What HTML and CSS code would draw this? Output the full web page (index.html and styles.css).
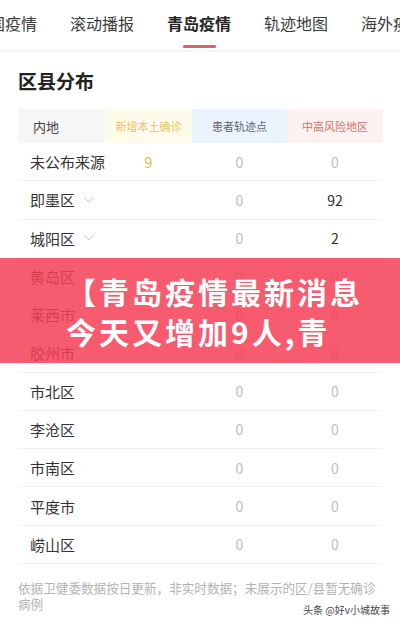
FILE: index.html
```html
<!DOCTYPE html>
<html lang="zh-CN">
<head>
<meta charset="utf-8">
<link rel="stylesheet" href="styles.css">
</head>
<body>
<div class="page">
  <nav class="tabs">
    <div class="tab-row">
      <span class="tab">全国疫情</span>
      <span class="tab">滚动播报</span>
      <span class="tab active">青岛疫情</span>
      <span class="tab">轨迹地图</span>
      <span class="tab">海外疫情</span>
    </div>
  </nav>
  <section class="district">
    <h2 class="title">区县分布</h2>
    <div class="table">
      <div class="row head">
        <div class="c-name">内地</div>
        <div class="c-new">新增本土确诊</div>
        <div class="c-track">患者轨迹点</div>
        <div class="c-risk">中高风险地区</div>
      </div>
      <div class="row"><div class="name">未公布来源</div><div class="num new">9</div><div class="num">0</div><div class="num">0</div></div>
      <div class="row"><div class="name">即墨区<svg class="chev" viewBox="0 0 10 6" width="10" height="6"><polyline points="0.5,0.5 5,5 9.5,0.5"/></svg></div><div class="num new"></div><div class="num">0</div><div class="num dark">92</div></div>
      <div class="row"><div class="name">城阳区<svg class="chev" viewBox="0 0 10 6" width="10" height="6"><polyline points="0.5,0.5 5,5 9.5,0.5"/></svg></div><div class="num new"></div><div class="num">0</div><div class="num dark">2</div></div>
      <div class="row"><div class="name">黄岛区</div><div class="num new"></div><div class="num">0</div><div class="num">0</div></div>
      <div class="row"><div class="name">莱西市</div><div class="num new"></div><div class="num">0</div><div class="num">0</div></div>
      <div class="row"><div class="name">胶州市</div><div class="num new"></div><div class="num">0</div><div class="num">0</div></div>
      <div class="row"><div class="name">市北区</div><div class="num new"></div><div class="num">0</div><div class="num">0</div></div>
      <div class="row"><div class="name">李沧区</div><div class="num new"></div><div class="num">0</div><div class="num">0</div></div>
      <div class="row"><div class="name">市南区</div><div class="num new"></div><div class="num">0</div><div class="num">0</div></div>
      <div class="row"><div class="name">平度市</div><div class="num new"></div><div class="num">0</div><div class="num">0</div></div>
      <div class="row"><div class="name">崂山区</div><div class="num new"></div><div class="num">0</div><div class="num">0</div></div>
    </div>
    <p class="note">依据卫健委数据按日更新，非实时数据；未展示的区/县暂无确诊病例</p>
  </section>
  <div class="banner">
    <span class="line">【青岛疫情最新消息</span>
    <span class="line">今天又增加9人,青</span>
  </div>
  <div class="watermark">头条 @好v小城故事</div>
</div>
</body>
</html>
```
FILE: styles.css
```css
* { box-sizing: border-box; }
html, body { margin: 0; padding: 0; background: #fff; }
body {
  font-family: "Noto Sans CJK SC", "Noto Sans", sans-serif;
  color: #333;
  width: 400px;
  height: 623px;
  overflow: hidden;
}
.page { position: relative; width: 400px; height: 623px; overflow: hidden; }

.tabs {
  height: 51px;
  border-bottom: 1px solid #f1f1f1;
  box-shadow: 0 1px 3px rgba(0,0,0,0.03);
  overflow: hidden;
}
.tab-row {
  display: flex;
  gap: 33px;
  margin-left: -27px;
  white-space: nowrap;
}
.tab {
  position: relative;
  flex: none;
  width: 64px;
  font-size: 16px;
  line-height: 22px;
  padding-top: 12px;
  height: 50px;
  color: #3a3a3a;
  letter-spacing: 0;
}
.tab.active { font-weight: 700; color: #262626; }
.tab.active::after {
  content: "";
  position: absolute;
  left: 16px;
  top: 45px;
  width: 33px;
  height: 3px;
  border-radius: 2px;
  background: #d7636b;
}

.district { padding: 0 17px 0 18px; }
.title {
  margin: 0;
  padding-top: 16px;
  font-size: 19px;
  line-height: 28px;
  font-weight: 700;
  color: #222;
}
.table { margin-top: 14px; }
.row {
  display: grid;
  grid-template-columns: 87px 87px 95px 96px;
  height: 38.27px;
  align-items: center;
  border-bottom: 1px solid #f2f2f2;
}
.row.head {
  height: 34px;
  border-bottom: none;
  align-items: stretch;
}
.row.head > div {
  display: flex;
  align-items: center;
  justify-content: center;
  font-size: 11px;
}
.row.head .c-name {
  justify-content: flex-start;
  padding-left: 15px;
  font-size: 13px;
  color: #444;
  background: #f6f6f6;
}
.row.head .c-new { background: #fffbeb; color: #e6c46a; }
.row.head .c-track { background: #ebf3fe; color: #5f6670; }
.row.head .c-risk { background: #fdf1f1; color: #cf736d; }

.name {
  padding-left: 12px;
  font-size: 15px;
  color: #333;
  display: flex;
  align-items: center;
  white-space: nowrap;
}
.chev {
  margin-left: 9px;
  fill: none;
  stroke: #c4c4c4;
  stroke-width: 1;
}
.num {
  text-align: center;
  font-size: 14px;
  color: #bdbdbd;
}
.num.new { color: #e2b93a; }
.num.dark { color: #2a2a2a; }

.note {
  margin: 16px 0 0;
  padding-left: 0;
  font-size: 12.6px;
  line-height: 16px;
  color: #b3b3b3;
}

.banner {
  position: absolute;
  left: 0;
  top: 258px;
  width: 400px;
  height: 105px;
  background: rgba(244, 62, 86, 0.85);
  padding: 13px 0 0 66px;
  color: #fff;
  font-weight: 700;
  font-size: 30px;
  line-height: 40px;
  letter-spacing: 3px;
}
.banner .line { display: block; white-space: nowrap; }

.watermark {
  position: absolute;
  right: 10px;
  top: 602px;
  font-size: 10px;
  line-height: 16px;
  color: #444;
  text-shadow: 0 0 2px #fff, 0 0 1px #fff;
}
```
